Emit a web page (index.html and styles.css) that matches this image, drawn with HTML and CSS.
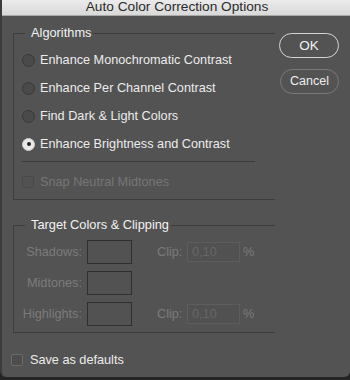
FILE: index.html
```html
<!DOCTYPE html>
<html>
<head>
<meta charset="utf-8">
<link rel="stylesheet" href="styles.css">
</head>
<body>
<div class="window">
  <div class="titlebar">Auto Color Correction Options</div>
  <div class="content">
    <div class="main">
      <div class="left">
        <fieldset class="group algo">
          <legend>Algorithms</legend>
          <div class="inner">
            <div class="radio"><span class="rb"></span>Enhance Monochromatic Contrast</div>
            <div class="radio"><span class="rb"></span>Enhance Per Channel Contrast</div>
            <div class="radio"><span class="rb"></span>Find Dark &amp; Light Colors</div>
            <div class="radio"><span class="rb on"></span>Enhance Brightness and Contrast</div>
            <div class="sep"></div>
            <div class="check disabled"><span class="cb"></span>Snap Neutral Midtones</div>
          </div>
        </fieldset>
        <fieldset class="group target">
          <legend>Target Colors &amp; Clipping</legend>
          <div class="inner">
            <div class="trow">
              <span class="tlabel">Shadows:</span><span class="swatch"></span>
              <span class="clip">Clip:</span><span class="field">0,10</span><span class="pct">%</span>
            </div>
            <div class="trow">
              <span class="tlabel">Midtones:</span><span class="swatch"></span>
            </div>
            <div class="trow">
              <span class="tlabel">Highlights:</span><span class="swatch"></span>
              <span class="clip">Clip:</span><span class="field">0,10</span><span class="pct">%</span>
            </div>
          </div>
        </fieldset>
      </div>
      <div class="buttons">
        <div class="btn ok">OK</div>
        <div class="btn cancel">Cancel</div>
      </div>
    </div>
    <div class="check save"><span class="cb"></span>Save as defaults</div>
  </div>
</div>
</body>
</html>
```
FILE: styles.css
```css
* { box-sizing: border-box; }
html, body { margin: 0; padding: 0; }
body {
  width: 350px;
  height: 380px;
  background: #242424;
  font-family: "Liberation Sans", Arial, sans-serif;
  font-size: 12.7px;
  color: #ececec;
  overflow: hidden;
}
.window {
  width: 350px;
  height: 377px;
  background: #535353;
  border-left: 2px solid #3c3c3c;
  border-radius: 0 0 6px 6px;
  overflow: hidden;
  display: flex;
  flex-direction: column;
}
.titlebar {
  height: 16px;
  background: linear-gradient(#ebebeb, #d9d9d9);
  color: #2a2a2a;
  text-align: center;
  font-size: 13.7px;
  line-height: 14px;
  padding-left: 2px;
  border-bottom: 1px solid #a9a9a9;
  overflow: hidden;
}
.content {
  flex: 1;
  display: flex;
  flex-direction: column;
}
.main {
  display: flex;
  align-items: flex-start;
}
.left {
  width: 262px;
  margin-left: 11px;
}
.group {
  border: 1px solid #3d3d3d;
  border-right: none;
  margin: 0;
  padding: 0;
  min-width: 0;
}
.group legend {
  margin-left: 11px;
  padding: 0 2px 0 6px;
  color: #f2f2f2;
  font-size: 12.8px;
  line-height: 14px;
}
.algo {
  margin-top: 10px;
}
.algo .inner {
  padding: 6px 0 9px 8px;
}
.radio {
  display: flex;
  align-items: center;
  height: 28px;
  gap: 5px;
  color: #ececec;
}
.rb {
  width: 13px;
  height: 13px;
  border-radius: 50%;
  border: 1px solid #393939;
  background: #4a4a4a;
  display: inline-flex;
  align-items: center;
  justify-content: center;
}
.rb.on {
  background: #e9e9e9;
  border-color: #cfcfcf;
}
.rb.on::after {
  content: "";
  width: 4px;
  height: 4px;
  border-radius: 50%;
  background: #262626;
}
.sep {
  height: 1px;
  background: #3b3b3b;
  width: 233px;
  margin: 3px 0 12px;
}
.check {
  display: flex;
  align-items: center;
  height: 16px;
  gap: 6px;
}
.cb {
  width: 12px;
  height: 12px;
  border: 1px solid #474747;
  border-radius: 2px;
  background: #4f4f4f;
}
.check.disabled { color: #767676; }
.check.disabled .cb { border-color: #4a4a4a; background: #525252; }
.target {
  margin-top: 18px;
}
.target .inner {
  padding: 4px 0 3px 0;
}
.trow {
  display: flex;
  align-items: center;
  height: 31px;
  color: #7b7b7b;
}
.tlabel {
  width: 68px;
  text-align: right;
}
.swatch {
  width: 45px;
  height: 24px;
  margin-left: 5px;
  border: 1px solid #2f2f2f;
  background: #525252;
}
.clip {
  margin-left: 25px;
  width: 30px;
}
.field {
  width: 53px;
  height: 20px;
  border: 1px solid #5d5d5d;
  background: #515151;
  color: #676767;
  padding-left: 4px;
  line-height: 18px;
}
.pct { margin-left: 3px; }
.buttons {
  display: flex;
  flex-direction: column;
  margin-left: 4px;
  margin-top: 17px;
  gap: 11px;
}
.btn {
  width: 60px;
  height: 25px;
  border-radius: 13px;
  text-align: center;
  line-height: 23px;
  font-size: 12.5px;
}
.ok {
  border: 1.5px solid #d4d4d4;
  color: #f2f2f2;
  font-size: 13.5px;
}
.cancel {
  border: 1px solid #7a7a7a;
  color: #eeeeee;
  margin-left: 1px;
  width: 59px;
}
.save {
  margin-top: 19px;
  margin-left: 9px;
  color: #ececec;
  gap: 7px;
}
.save .cb { border-color: #6a6a6a; background: #4d4d4d; }
```
